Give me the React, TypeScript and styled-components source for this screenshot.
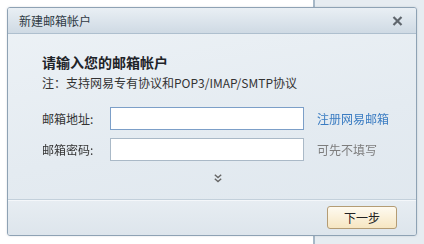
import React, { useState } from 'react'
import styled, { createGlobalStyle } from 'styled-components'

const GlobalStyle = createGlobalStyle`
	html, body {
		margin: 0;
		padding: 0;
		width: 424px;
		height: 244px;
		overflow: hidden;
		font-family: 'Noto Sans CJK SC', 'Liberation Sans', sans-serif;
		font-size: 12px;
		color: #333;
	}
	* {
		box-sizing: border-box;
	}
`

const Screen = styled.div`
	position: relative;
	width: 424px;
	height: 244px;
	display: flex;
`

const PageLeft = styled.div`
	width: 315px;
	height: 100%;
	background: #ffffff;
	border-right: 2px solid #a6b8c7;
`

const PageRight = styled.div`
	flex: 1;
	height: 100%;
	background: #e6ecf1;
`

const Dialog = styled.div`
	position: absolute;
	left: 7px;
	top: 7px;
	width: 410px;
	height: 229px;
	display: flex;
	flex-direction: column;
	border: 1px solid #8ea2b4;
	border-radius: 3px;
	background: linear-gradient(170deg, #edf2f6 0%, #e4ebf1 55%, #dfe7ee 100%);
	box-shadow: 0 0 2px rgba(90, 110, 130, 0.25);
	overflow: hidden;
`

const TitleBar = styled.div`
	height: 26px;
	flex: none;
	display: flex;
	align-items: center;
	justify-content: space-between;
	padding: 0 12px 0 11px;
	background: linear-gradient(#e9eff4, #cfdae4);
	border-bottom: 1px solid #aebfce;
`

const Title = styled.span`
	font-size: 12px;
	color: #2f3a45;
	line-height: 16px;
`

const CloseButton = styled.button`
	width: 14px;
	height: 14px;
	padding: 0;
	border: none;
	background: none;
	display: flex;
	align-items: center;
	justify-content: center;
	cursor: pointer;
`

const Body = styled.div`
	flex: 1;
	padding: 18px 0 0 34px;
	display: flex;
	flex-direction: column;
`

const Heading = styled.h2`
	margin: 0;
	font-size: 14px;
	font-weight: bold;
	line-height: 20px;
	color: #1e2328;
`

const Note = styled.p`
	margin: 2px 0 0;
	font-size: 12px;
	line-height: 18px;
	color: #333;
`

const Form = styled.div`
	margin-top: 15px;
	display: grid;
	grid-template-columns: 68px 194px auto;
	row-gap: 8px;
	align-items: center;
`

const Label = styled.label`
	font-size: 12px;
	color: #333;
	line-height: 22px;
`

const TextInput = styled.input<{ $active?: boolean }>`
	width: 194px;
	height: 23px;
	margin: 0;
	padding: 0 7px;
	font-family: inherit;
	font-size: 12px;
	background: #fff;
	border: 1px solid ${(p) => (p.$active ? '#7c9fc8' : '#aab9c7')};
	outline: none;
`

const SideLink = styled.a<{ $muted?: boolean }>`
	margin-left: 13px;
	font-size: 12px;
	line-height: 22px;
	color: ${(p) => (p.$muted ? '#7d7d7d' : '#3a7cc2')};
	text-decoration: none;
	cursor: ${(p) => (p.$muted ? 'default' : 'pointer')};
`

const MoreRow = styled.div`
	margin-top: 13px;
	padding-left: 172px;
	height: 9px;
	display: flex;
	align-items: center;
`

const Footer = styled.div`
	flex: none;
	height: 36px;
	display: flex;
	align-items: center;
	justify-content: flex-end;
	padding: 0 19px 1px 0;
	border-top: 1px solid #c3d0db;
	box-shadow: inset 0 1px 0 #f4f7fa;
	background: linear-gradient(#e7edf2, #dde5ec);
`

const NextButton = styled.button`
	width: 70px;
	height: 23px;
	padding: 0;
	font-family: inherit;
	font-size: 12px;
	color: #222;
	border: 1px solid #b49c74;
	border-radius: 3px;
	background: linear-gradient(#fefaf0, #f6e6c2);
	cursor: pointer;
`

export default function App() {
	const [account, setAccount] = useState('')
	const [password, setPassword] = useState('')

	return (
		<Screen>
			<GlobalStyle />
			<PageLeft />
			<PageRight />
			<Dialog>
				<TitleBar>
					<Title>新建邮箱帐户</Title>
					<CloseButton aria-label="关闭">
						<svg width="11" height="10" viewBox="0 0 11 10">
							<path
								d="M1.5 1 L9.5 9 M9.5 1 L1.5 9"
								stroke="#5f666d"
								strokeWidth="2.2"
								fill="none"
							/>
						</svg>
					</CloseButton>
				</TitleBar>
				<Body>
					<Heading>请输入您的邮箱帐户</Heading>
					<Note>注：支持网易专有协议和POP3/IMAP/SMTP协议</Note>
					<Form>
						<Label>邮箱地址:</Label>
						<TextInput
							$active
							autoFocus
							value={account}
							onChange={(e) => setAccount(e.target.value)}
						/>
						<SideLink href="#">注册网易邮箱</SideLink>
						<Label>邮箱密码:</Label>
						<TextInput
							type="password"
							value={password}
							onChange={(e) => setPassword(e.target.value)}
						/>
						<SideLink $muted>可先不填写</SideLink>
					</Form>
					<MoreRow>
						<svg width="8" height="9" viewBox="0 0 8 9">
							<path
								d="M0.8 0.8 L4 3.6 L7.2 0.8 M0.8 4.8 L4 7.6 L7.2 4.8"
								stroke="#666"
								strokeWidth="1.4"
								fill="none"
							/>
						</svg>
					</MoreRow>
				</Body>
				<Footer>
					<NextButton>下一步</NextButton>
				</Footer>
			</Dialog>
		</Screen>
	)
}
